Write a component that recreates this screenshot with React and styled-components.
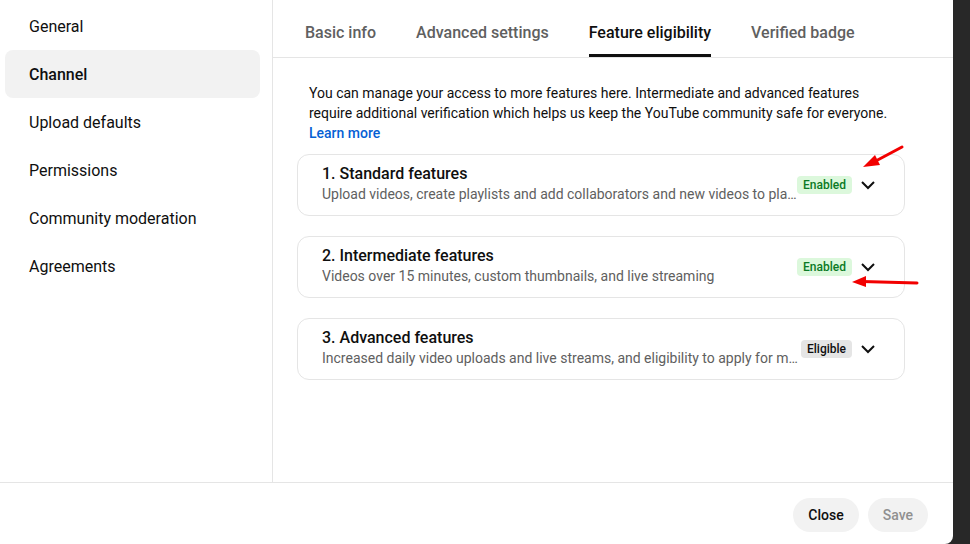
import React from "react";
import styled, { createGlobalStyle } from "styled-components";

const GlobalStyle = createGlobalStyle`
  html, body {
    margin: 0;
    padding: 0;
    background: #282828;
  }
  body {
    font-family: Roboto, "Noto Sans", Arial, sans-serif;
    color: #0f0f0f;
    -webkit-font-smoothing: antialiased;
  }
  * {
    box-sizing: border-box;
  }
`;

const Page = styled.div`
  position: relative;
  width: 970px;
  height: 544px;
  overflow: hidden;
  background: #282828;
`;

const Dialog = styled.div`
  width: 953px;
  height: 544px;
  background: #fff;
  border-bottom-right-radius: 8px;
  display: flex;
  flex-direction: column;
`;

const Body = styled.div`
  flex: 1;
  display: flex;
  min-height: 0;
`;

const Sidebar = styled.nav`
  width: 273px;
  flex-shrink: 0;
  border-right: 1px solid #e5e5e5;
  padding: 2px 12px 0 5px;
`;

const NavItem = styled.div`
  height: 48px;
  display: flex;
  align-items: center;
  padding-left: 24px;
  border-radius: 8px;
  font-size: 16px;
  font-weight: ${({ $active }) => ($active ? 500 : 400)};
  background: ${({ $active }) => ($active ? "#f2f2f2" : "transparent")};
  cursor: pointer;
`;

const Main = styled.div`
  flex: 1;
  display: flex;
  flex-direction: column;
  min-width: 0;
`;

const Tabs = styled.div`
  display: flex;
  gap: 40px;
  padding-left: 32px;
  border-bottom: 1px solid #e5e5e5;
`;

const Tab = styled.div`
  height: 57px;
  padding-top: 10px;
  display: flex;
  align-items: center;
  font-size: 16px;
  font-weight: 500;
  color: ${({ $active }) => ($active ? "#0f0f0f" : "#606060")};
  border-bottom: 3px solid ${({ $active }) => ($active ? "#0f0f0f" : "transparent")};
  cursor: pointer;
`;

const Content = styled.div`
  padding: 25px 48px 0 24px;
  display: flex;
  flex-direction: column;
  gap: 20px;
`;

const Intro = styled.p`
  margin: 0 0 -10px;
  padding: 0 12px;
  font-size: 14px;
  line-height: 20px;
  color: #0f0f0f;
`;

const LearnMore = styled.a`
  display: block;
  color: #065fd4;
  font-weight: 500;
  text-decoration: none;
  line-height: 21px;
`;

const Card = styled.div`
  display: flex;
  align-items: center;
  height: 62px;
  border: 1px solid #e5e5e5;
  border-radius: 12px;
  padding: 0 24px;
`;

const CardText = styled.div`
  flex: 1;
  min-width: 0;
  padding: 9px 0 11px;
`;

const CardTitle = styled.div`
  font-size: 16px;
  line-height: 20px;
  font-weight: 500;
  color: #0f0f0f;
`;

const CardSub = styled.div`
  font-size: 14px;
  line-height: 20px;
  color: #606060;
  white-space: nowrap;
  overflow: hidden;
  text-overflow: ellipsis;
`;

const Badge = styled.span`
  flex-shrink: 0;
  height: 18px;
  padding: 0 6px;
  border-radius: 4px;
  display: inline-flex;
  align-items: center;
  font-size: 12px;
  font-weight: 500;
  background: ${({ $tone }) => ($tone === "green" ? "#dcf8dc" : "#e5e5e5")};
  color: ${({ $tone }) => ($tone === "green" ? "#0b7a25" : "#0f0f0f")};
`;

const Chevron = styled.svg`
  flex-shrink: 0;
  width: 24px;
  height: 24px;
  margin-left: 4px;
`;

const Footer = styled.div`
  height: 62px;
  border-top: 1px solid #e5e5e5;
  display: flex;
  align-items: center;
  justify-content: flex-end;
  gap: 9px;
  padding: 3px 25px 0 0;
`;

const Button = styled.button`
  height: 34px;
  padding: 0 15px;
  border: none;
  border-radius: 17px;
  background: #f2f2f2;
  font-family: inherit;
  font-size: 14px;
  font-weight: 500;
  color: ${({ disabled }) => (disabled ? "#909090" : "#0f0f0f")};
`;

const Marks = styled.svg`
  position: absolute;
  inset: 0;
  pointer-events: none;
`;

const navItems = [
  "General",
  "Channel",
  "Upload defaults",
  "Permissions",
  "Community moderation",
  "Agreements",
];

const tabs = ["Basic info", "Advanced settings", "Feature eligibility", "Verified badge"];

const features = [
  {
    title: "1. Standard features",
    sub: "Upload videos, create playlists and add collaborators and new videos to playlists",
    status: "Enabled",
    tone: "green",
  },
  {
    title: "2. Intermediate features",
    sub: "Videos over 15 minutes, custom thumbnails, and live streaming",
    status: "Enabled",
    tone: "green",
  },
  {
    title: "3. Advanced features",
    sub: "Increased daily video uploads and live streams, and eligibility to apply for monetization",
    status: "Eligible",
    tone: "grey",
  },
];

const FeatureCard = ({ title, sub, status, tone }) => (
  <Card>
    <CardText>
      <CardTitle>{title}</CardTitle>
      <CardSub>{sub}</CardSub>
    </CardText>
    <Badge $tone={tone}>{status}</Badge>
    <Chevron viewBox="0 0 24 24" fill="none">
      <path d="M6 9l6 6 6-6" stroke="#0f0f0f" strokeWidth="2" />
    </Chevron>
  </Card>
);

const App = () => {
  return (
    <Page>
      <GlobalStyle />
      <Dialog>
        <Body>
          <Sidebar>
            {navItems.map((item) => (
              <NavItem key={item} $active={item === "Channel"}>
                {item}
              </NavItem>
            ))}
          </Sidebar>
          <Main>
            <Tabs>
              {tabs.map((t) => (
                <Tab key={t} $active={t === "Feature eligibility"}>
                  {t}
                </Tab>
              ))}
            </Tabs>
            <Content>
              <Intro>
                You can manage your access to more features here. Intermediate and advanced
                features require additional verification which helps us keep the YouTube
                community safe for everyone.
                <LearnMore href="#">Learn more</LearnMore>
              </Intro>
              {features.map((f) => (
                <FeatureCard key={f.title} {...f} />
              ))}
            </Content>
          </Main>
        </Body>
        <Footer>
          <Button>Close</Button>
          <Button disabled>Save</Button>
        </Footer>
      </Dialog>

      {/* red pointer arrows drawn on top */}
      <Marks width="970" height="544" viewBox="0 0 970 544">
        <line x1="902" y1="147" x2="872" y2="163" stroke="#f20000" strokeWidth="3" strokeLinecap="round" />
        <polygon points="863,167 875,155 880,165" fill="#f20000" />
        <line x1="917" y1="283" x2="862" y2="281.5" stroke="#f20000" strokeWidth="3" strokeLinecap="round" />
        <polygon points="852,282 866,276 866,287" fill="#f20000" />
      </Marks>
    </Page>
  );
};

export default App;
